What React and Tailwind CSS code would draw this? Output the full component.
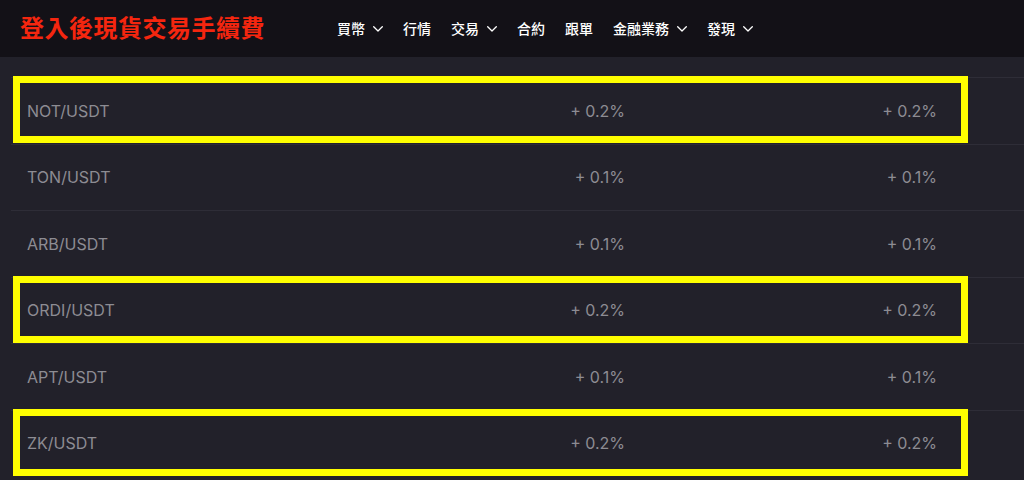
import React from 'react';

const NAV = [
  { label: '買幣', drop: true },
  { label: '行情' },
  { label: '交易', drop: true },
  { label: '合約' },
  { label: '跟單' },
  { label: '金融業務', drop: true },
  { label: '發現', drop: true },
];

const ROWS = [
  { pair: 'NOT/USDT', maker: '+ 0.2%', taker: '+ 0.2%', mark: true },
  { pair: 'TON/USDT', maker: '+ 0.1%', taker: '+ 0.1%' },
  { pair: 'ARB/USDT', maker: '+ 0.1%', taker: '+ 0.1%' },
  { pair: 'ORDI/USDT', maker: '+ 0.2%', taker: '+ 0.2%', mark: true },
  { pair: 'APT/USDT', maker: '+ 0.1%', taker: '+ 0.1%' },
  { pair: 'ZK/USDT', maker: '+ 0.2%', taker: '+ 0.2%', mark: true },
];

const cjk = "font-['Inter','Noto_Sans_CJK_TC',sans-serif]";

const Chevron = () => (
  <svg width="10" height="6" viewBox="0 0 10 6" fill="none" className="mt-[1px]">
    <path d="M0.7 0.7 L5 5 L9.3 0.7" stroke="white" strokeWidth="1.3" strokeLinecap="round" strokeLinejoin="round" />
  </svg>
);

export default function App() {
  return (
    <div className={`w-[1024px] h-[480px] overflow-hidden bg-[#22212a] ${cjk}`}>
      {/* Header */}
      <div className="h-[57px] bg-[#131117] flex items-center">
        <div className="pl-5 w-[337px] text-[24px] leading-none font-bold text-[#f5260f] tracking-[0.5px]">
          登入後現貨交易手續費
        </div>
        <nav className="flex items-center gap-5 text-white text-[14px] font-medium">
          {NAV.map((n) => (
            <div key={n.label} className="flex items-center gap-2">
              <span>{n.label}</span>
              {n.drop && <Chevron />}
            </div>
          ))}
        </nav>
      </div>

      {/* Fee table */}
      <div className="pt-5 pl-[11px]">
        {ROWS.map((r) => (
          <div key={r.pair} className="relative h-[66.5px] border-t border-[#2e2d37] flex items-center text-[16px] text-[#8d8c93]">
            <div className="flex-1 pl-4">{r.pair}</div>
            <div className="w-[312px] text-right">{r.maker}</div>
            <div className="w-[399px] pr-[87px] text-right">{r.taker}</div>
            {r.mark && (
              <div className="absolute left-[2px] top-[-2px] w-[955px] h-[67px] border-[7px] border-[#ffff00]" />
            )}
          </div>
        ))}
      </div>
    </div>
  );
}
